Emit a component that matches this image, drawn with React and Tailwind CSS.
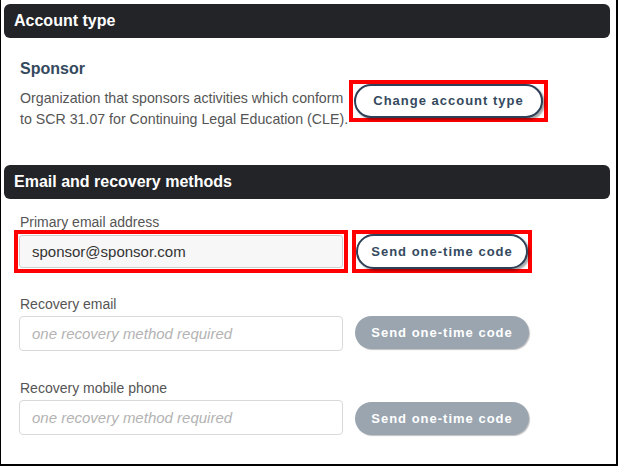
import React from 'react'

function SectionHeader({ title }) {
  return (
    <div className="h-[34px] rounded-md bg-[#222428] flex items-center pl-[10px]">
      <h2 className="text-[16px] font-bold text-white leading-none">{title}</h2>
    </div>
  )
}

// red rectangle drawn round a highlighted control
function Highlight({ children, gap }) {
  return (
    <div className={'border-4 border-[#ff0000] ' + gap}>
      {children}
    </div>
  )
}

function OutlineButton({ label, width }) {
  return (
    <button
      className={
        'block rounded-full border-2 border-[#2e4158] bg-white text-[13px] font-bold tracking-[1px] text-[#34495e] shadow-[2px_2px_2px_rgba(0,0,0,0.35)] ' +
        width
      }
    >
      {label}
    </button>
  )
}

function DisabledButton({ label }) {
  return (
    <button className="h-[33px] w-[174px] rounded-full bg-[#9aa5b0] text-[13px] font-bold tracking-[1px] text-white shadow-[1px_1px_1px_rgba(0,0,0,0.25)]">
      {label}
    </button>
  )
}

function FieldRow({ label, children, className }) {
  return (
    <div className={className}>
      <label className="block text-[14px] leading-4 text-[#555]">{label}</label>
      {children}
    </div>
  )
}

export default function App() {
  return (
    <div
      className="w-[618px] h-[466px] bg-white border-l border-r-2 border-b-2 border-black pt-1 pl-[3px] pr-[6px]"
      style={{ fontFamily: '"Liberation Sans", Arial, sans-serif' }}
    >
      <SectionHeader title="Account type" />

      <div className="flex pl-4 mt-[21px]">
        <div className="w-[329px] shrink-0">
          <h3 className="text-[16px] font-bold leading-5 text-[#34495e]">Sponsor</h3>
          <p className="mt-[9px] text-[14.2px] leading-[21px] text-[#555]">
            Organization that sponsors activities which conform to SCR 31.07 for Continuing Legal Education (CLE).
          </p>
        </div>
        <div className="mt-[21px]">
          <Highlight gap="px-px">
            <OutlineButton label="Change account type" width="w-[189px] h-[34px]" />
          </Highlight>
        </div>
      </div>

      <div className="mt-[35px]">
        <SectionHeader title="Email and recovery methods" />
      </div>

      <div className="pl-4">
        <FieldRow label="Primary email address" className="mt-[15px]">
          <div className="flex items-start -ml-[6px]">
            <Highlight gap="p-px">
              <input
                readOnly
                value="sponsor@sponsor.com"
                className="block w-[324px] h-[33px] rounded-[3px] border border-[#cfcfcf] bg-[#f7f7f7] px-3 text-[15px] text-[#333] outline-none"
              />
            </Highlight>
            <div className="ml-1">
              <Highlight gap="p-0">
                <OutlineButton label="Send one-time code" width="w-[172px] h-[35px]" />
              </Highlight>
            </div>
          </div>
        </FieldRow>

        <FieldRow label="Recovery email" className="mt-[23px]">
          <div className="flex items-start gap-3 mt-1 -ml-px">
            <input
              placeholder="one recovery method required"
              className="w-[324px] h-[35px] rounded-[4px] border border-[#d9d9d9] bg-white px-3 text-[15px] italic placeholder:text-[#b3b3b3] outline-none"
            />
            <DisabledButton label="Send one-time code" />
          </div>
        </FieldRow>

        <FieldRow label="Recovery mobile phone" className="mt-[29px]">
          <div className="flex items-start gap-3 mt-1 -ml-px">
            <input
              placeholder="one recovery method required"
              className="w-[324px] h-[35px] rounded-[4px] border border-[#d9d9d9] bg-white px-3 text-[15px] italic placeholder:text-[#b3b3b3] outline-none"
            />
            <div className="mt-[2px]">
              <DisabledButton label="Send one-time code" />
            </div>
          </div>
        </FieldRow>
      </div>
    </div>
  )
}
